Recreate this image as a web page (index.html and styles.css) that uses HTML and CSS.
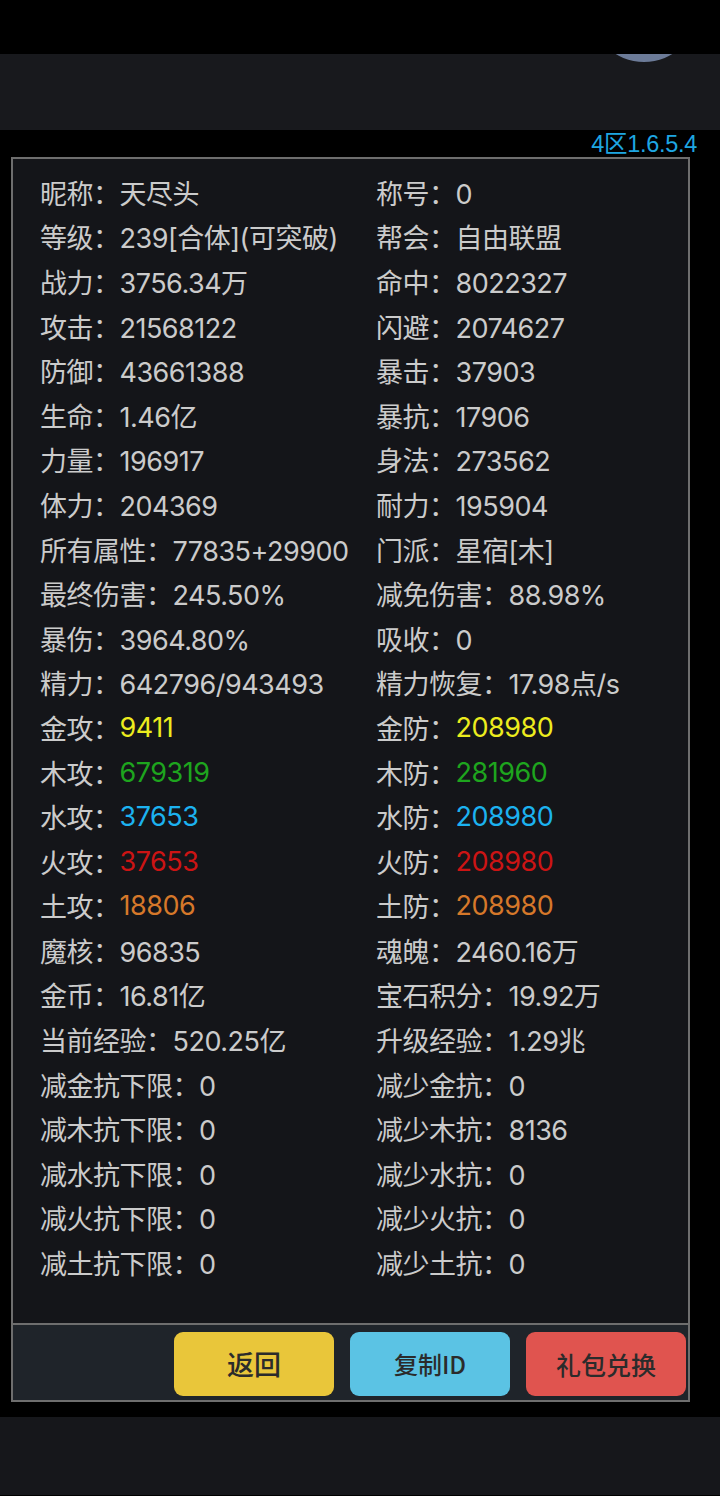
FILE: index.html
```html
<!DOCTYPE html>
<html lang="zh-CN">
<head>
    <meta charset="UTF-8">
    <meta name="viewport" content="width=device-width, initial-scale=1.0">
    <title>角色属性</title>
    <link rel="stylesheet" href="styles.css">
</head>
<body>

    <div class="status-bar"></div>

    <!-- Top bar with avatar (cut off by status bar) -->
    <div class="top-bar">
        <div class="avatar"></div>
    </div>

    <div class="main">
        <div class="version">4区1.6.5.4</div>

        <div class="panel">
            <div class="stats">
                <div class="stat">昵称：天尽头</div>
                <div class="stat">称号：0</div>
                <div class="stat">等级：239[合体](可突破)</div>
                <div class="stat">帮会：自由联盟</div>
                <div class="stat">战力：3756.34万</div>
                <div class="stat">命中：8022327</div>
                <div class="stat">攻击：21568122</div>
                <div class="stat">闪避：2074627</div>
                <div class="stat">防御：43661388</div>
                <div class="stat">暴击：37903</div>
                <div class="stat">生命：1.46亿</div>
                <div class="stat">暴抗：17906</div>
                <div class="stat">力量：196917</div>
                <div class="stat">身法：273562</div>
                <div class="stat">体力：204369</div>
                <div class="stat">耐力：195904</div>
                <div class="stat">所有属性：77835+29900</div>
                <div class="stat">门派：星宿[木]</div>
                <div class="stat">最终伤害：245.50%</div>
                <div class="stat">减免伤害：88.98%</div>
                <div class="stat">暴伤：3964.80%</div>
                <div class="stat">吸收：0</div>
                <div class="stat">精力：642796/943493</div>
                <div class="stat">精力恢复：17.98点/s</div>
                <div class="stat">金攻：<span class="gold">9411</span></div>
                <div class="stat">金防：<span class="gold">208980</span></div>
                <div class="stat">木攻：<span class="wood">679319</span></div>
                <div class="stat">木防：<span class="wood">281960</span></div>
                <div class="stat">水攻：<span class="water">37653</span></div>
                <div class="stat">水防：<span class="water">208980</span></div>
                <div class="stat">火攻：<span class="fire">37653</span></div>
                <div class="stat">火防：<span class="fire">208980</span></div>
                <div class="stat">土攻：<span class="earth">18806</span></div>
                <div class="stat">土防：<span class="earth">208980</span></div>
                <div class="stat">魔核：96835</div>
                <div class="stat">魂魄：2460.16万</div>
                <div class="stat">金币：16.81亿</div>
                <div class="stat">宝石积分：19.92万</div>
                <div class="stat">当前经验：520.25亿</div>
                <div class="stat">升级经验：1.29兆</div>
                <div class="stat">减金抗下限：0</div>
                <div class="stat">减少金抗：0</div>
                <div class="stat">减木抗下限：0</div>
                <div class="stat">减少木抗：8136</div>
                <div class="stat">减水抗下限：0</div>
                <div class="stat">减少水抗：0</div>
                <div class="stat">减火抗下限：0</div>
                <div class="stat">减少火抗：0</div>
                <div class="stat">减土抗下限：0</div>
                <div class="stat">减少土抗：0</div>
            </div>

            <div class="footer">
                <button class="btn btn-back">返回</button>
                <button class="btn btn-copy">复制ID</button>
                <button class="btn btn-gift">礼包兑换</button>
            </div>
        </div>
    </div>

    <div class="bottom-bar"></div>

</body>
</html>
```

FILE: styles.css
```css
body {
    margin: 0;
    background: #000;
    font-family: Inter, 'Noto Sans CJK SC', sans-serif;
    color: #cbcbcb;
}

.status-bar {
    height: 54px;
    background: #000;
    position: relative;
    z-index: 2;
}

.top-bar {
    height: 76px;
    background: #18191d;
    position: relative;
    overflow: hidden;
}

.avatar {
    position: absolute;
    left: 590px;
    top: -100px;
    width: 108px;
    height: 108px;
    border-radius: 50%;
    background: #6c7b98;
}

.main {
    padding-bottom: 15px;
}

.version {
    height: 27px;
    line-height: 29px;
    text-align: right;
    padding-right: 23px;
    font-size: 23.5px;
    letter-spacing: -0.3px;
    color: #1ea6e2;
    font-family: 'Liberation Sans', 'Noto Sans CJK SC', sans-serif;
}

.panel {
    margin-left: 11px;
    width: 675px;
    border: 2px solid #6e6e6e;
    background: #141519;
}

.stats {
    display: grid;
    grid-template-columns: 336px 1fr;
    grid-auto-rows: 44.6px;
    padding: 11px 0 38px 27px;
    font-size: 27px;
    letter-spacing: -0.5px;
}

.stat {
    display: flex;
    align-items: center;
    white-space: nowrap;
}

.gold { color: #ecec1e; }
.wood { color: #1ea51e; }
.water { color: #1cb2f0; }
.fire { color: #cc1414; }
.earth { color: #d6782a; }

.footer {
    display: flex;
    justify-content: flex-end;
    gap: 16px;
    border-top: 2px solid #6e6e6e;
    background: #1f242a;
    padding: 7px 2px 4px;
}

.btn {
    width: 160px;
    height: 64px;
    border: none;
    border-radius: 9px;
    font-family: 'Noto Sans CJK SC', sans-serif;
    font-weight: 500;
    color: #2b2b2b;
    cursor: pointer;
}

.btn-back {
    background: #e9c63a;
    font-size: 27px;
}

.btn-copy {
    background: #5bc3e4;
    font-size: 24px;
}

.btn-gift {
    background: #e0544f;
    font-size: 25px;
}

.bottom-bar {
    height: 78px;
    background: #16171b;
}
```
